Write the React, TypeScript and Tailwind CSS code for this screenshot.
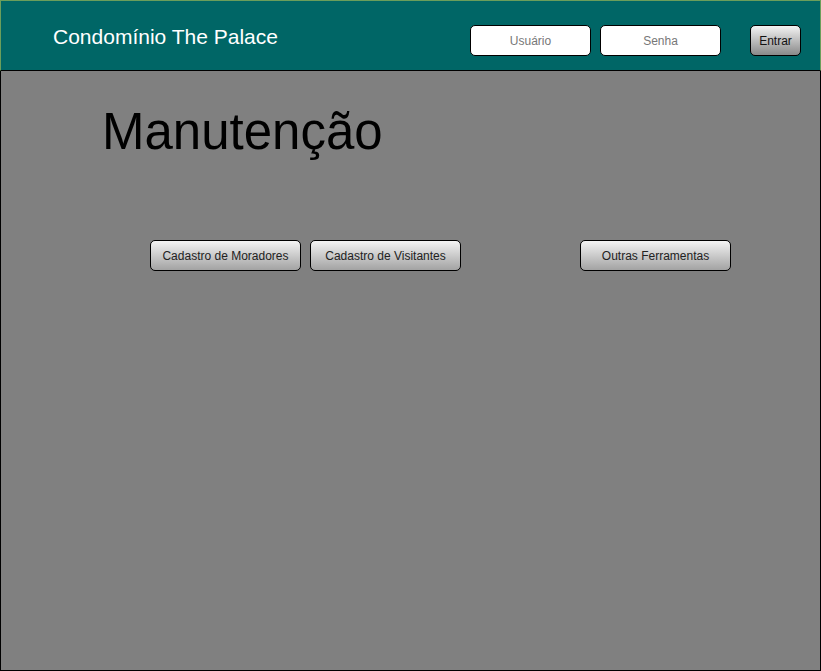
import React from "react";

const btn =
  "h-[31px] w-[151px] rounded-[5px] border border-black bg-gradient-to-b from-[#f4f4f4] to-[#a3a3a3] text-[12px] text-[#222] flex items-center justify-center";

export default function App() {
  return (
    <div className="w-[821px] h-[671px] flex flex-col font-['Liberation_Sans',Arial,sans-serif]">
      <header className="h-[71px] shrink-0 bg-[#006666] border-t border-l border-r border-[#6b9e5b] border-b border-b-black flex items-start pl-[52px] pr-[19px]">
        <div className="mt-[25px] text-white text-[21px] leading-none">Condomínio The Palace</div>
        <div className="ml-auto mt-[24px] flex items-center">
          <div className="w-[121px] h-[31px] bg-white border border-black rounded-[5px] flex items-center justify-center text-[12px] text-[#777]">
            Usuário
          </div>
          <div className="ml-[9px] w-[121px] h-[31px] bg-white border border-black rounded-[5px] flex items-center justify-center text-[12px] text-[#777]">
            Senha
          </div>
          <div className="ml-[29px] w-[51px] h-[31px] rounded-[5px] border border-black bg-gradient-to-b from-[#f4f4f4] to-[#8a8a8a] flex items-center justify-center text-[12px] text-[#111]">
            Entrar
          </div>
        </div>
      </header>
      <main className="flex-1 bg-[#808080] border-l border-r border-b border-black flex flex-col">
        <h1 className="ml-[101px] mt-[31px] text-[51px] leading-[60px] text-black">Manutenção</h1>
        <div className="mt-[78px] ml-[149px] flex">
          <div className={btn}>Cadastro de Moradores</div>
          <div className={"ml-[9px] " + btn}>Cadastro de Visitantes</div>
          <div className={"ml-[119px] " + btn}>Outras Ferramentas</div>
        </div>
      </main>
    </div>
  );
}
